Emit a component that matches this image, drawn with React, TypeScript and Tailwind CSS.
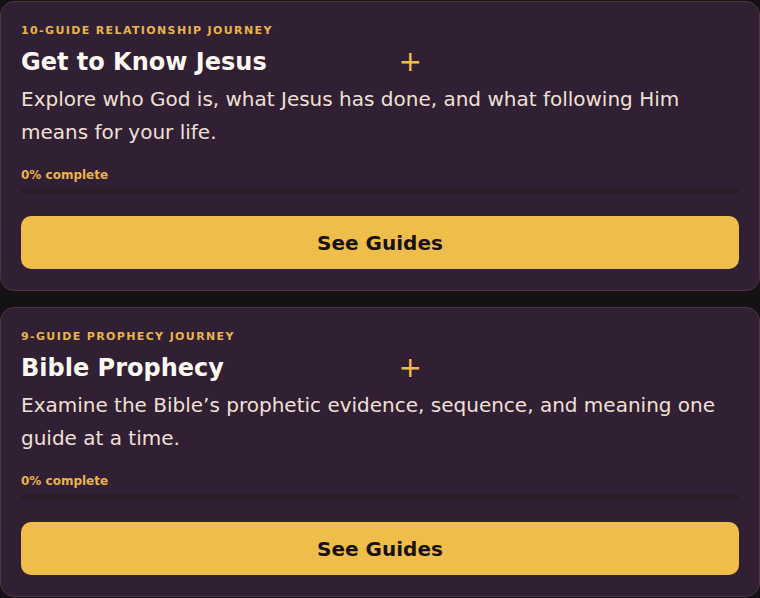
import React from "react";

type Journey = { eyebrow: string; title: string; desc: string };

const journeys: Journey[] = [
  {
    eyebrow: "10-Guide Relationship Journey",
    title: "Get to Know Jesus",
    desc: "Explore who God is, what Jesus has done, and what following Him means for your life.",
  },
  {
    eyebrow: "9-Guide Prophecy Journey",
    title: "Bible Prophecy",
    desc: "Examine the Bible\u2019s prophetic evidence, sequence, and meaning one guide at a time.",
  },
];

function Card({ j }: { j: Journey }) {
  return (
    <div className="rounded-[14px] border border-[#4a3838] bg-[#311f33] px-5 pt-[22px] pb-[21px]">
      <div className="text-[11px] font-bold uppercase leading-[14px] tracking-[0.125em] text-[#e8b54c]">
        {j.eyebrow}
      </div>
      <div className="mt-[7px] flex w-[401px] items-center justify-between">
        <h2 className="text-[24px] font-bold leading-[34px] text-[#fdf8f2]">{j.title}</h2>
        <span className="text-[28px] leading-[34px] text-[#efbd4a]">+</span>
      </div>
      <p className="mt-[4px] text-[20px] leading-[33px] text-[#efe0d6]">{j.desc}</p>
      <div className="mt-[19px] text-[12px] font-bold leading-[14px] text-[#e8b54c]">0% complete</div>
      <div className="mt-[6px] h-[6px] w-full rounded-full bg-[#2a1f26]" />
      <button className="mt-[22px] flex h-[53px] w-full items-center justify-center rounded-[10px] bg-[#efbd4a] text-[20px] font-bold text-[#1a1212]">
        See Guides
      </button>
    </div>
  );
}

export default function App() {
  return (
    <div
      className="flex min-h-[598px] w-[760px] flex-col gap-4 bg-[#141214] pt-px"
      style={{ fontFamily: '"DejaVu Sans", sans-serif' }}
    >
      {journeys.map((j) => (
        <Card key={j.title} j={j} />
      ))}
    </div>
  );
}
